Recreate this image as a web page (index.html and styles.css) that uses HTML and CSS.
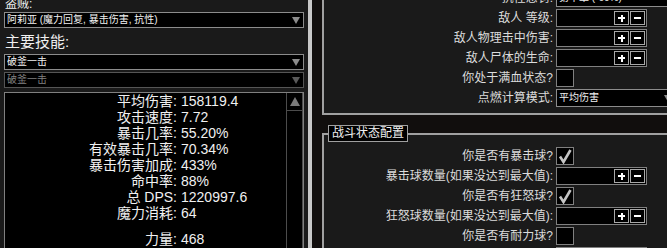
FILE: index.html
```html
<!DOCTYPE html>
<html lang="zh">
<head>
  <meta charset="UTF-8" />
  <title>配置</title>
  <link rel="stylesheet" href="styles.css">
</head>
<body>
  <div class="app">
    <div class="side">
      <div class="label small">盗贼:</div>
      <div class="select"><span>阿莉亚 (魔力回复, 暴击伤害, 抗性)</span><i class="arrow"></i></div>
      <div class="label big">主要技能:</div>
      <div class="select"><span>破釜一击</span><i class="arrow"></i></div>
      <div class="select disabled"><span>破釜一击</span><i class="arrow"></i></div>
      <div class="stats">
        <div class="stat-list">
          <div class="stat"><span class="k">平均伤害:</span><span class="v">158119.4</span></div>
          <div class="stat"><span class="k">攻击速度:</span><span class="v">7.72</span></div>
          <div class="stat"><span class="k">暴击几率:</span><span class="v">55.20%</span></div>
          <div class="stat"><span class="k">有效暴击几率:</span><span class="v">70.34%</span></div>
          <div class="stat"><span class="k">暴击伤害加成:</span><span class="v">433%</span></div>
          <div class="stat"><span class="k">命中率:</span><span class="v">88%</span></div>
          <div class="stat"><span class="k">总 DPS:</span><span class="v">1220997.6</span></div>
          <div class="stat"><span class="k">魔力消耗:</span><span class="v">64</span></div>
          <div class="stat spaced"><span class="k">力量:</span><span class="v">468</span></div>
        </div>
        <div class="scrollbar">
          <div class="scroll-up"><i></i></div>
        </div>
      </div>
    </div>
    <div class="divider"></div>
    <div class="config">
      <div class="section first">
        <div class="row"><span class="name">抗性惩罚:</span><div class="select wide"><span>第十章 (-60%)</span><i class="arrow"></i></div></div>
        <div class="row"><span class="name">敌人 等级:</span><div class="input"><b class="btn plus"></b><b class="btn minus"></b></div></div>
        <div class="row"><span class="name">敌人物理击中伤害:</span><div class="input"><b class="btn plus"></b><b class="btn minus"></b></div></div>
        <div class="row"><span class="name">敌人尸体的生命:</span><div class="input"><b class="btn plus"></b><b class="btn minus"></b></div></div>
        <div class="row"><span class="name">你处于满血状态?</span><div class="check"></div></div>
        <div class="row"><span class="name">点燃计算模式:</span><div class="select wide"><span>平均伤害</span><i class="arrow"></i></div></div>
      </div>
      <fieldset class="section">
        <legend>战斗状态配置</legend>
        <div class="row"><span class="name">你是否有暴击球?</span><div class="check on"><svg viewBox="0 0 16 16"><polyline points="3,8.5 6.5,14 13.5,2"/></svg></div></div>
        <div class="row"><span class="name">暴击球数量(如果没达到最大值):</span><div class="input"><b class="btn plus"></b><b class="btn minus"></b></div></div>
        <div class="row"><span class="name">你是否有狂怒球?</span><div class="check on"><svg viewBox="0 0 16 16"><polyline points="3,8.5 6.5,14 13.5,2"/></svg></div></div>
        <div class="row"><span class="name">狂怒球数量(如果没达到最大值):</span><div class="input"><b class="btn plus"></b><b class="btn minus"></b></div></div>
        <div class="row"><span class="name">你是否有耐力球?</span><div class="check"></div></div>
        <div class="row"><span class="name">耐力球数量(如果没达到最大值):</span><div class="input"><b class="btn plus"></b><b class="btn minus"></b></div></div>
      </fieldset>
    </div>
  </div>
</body>
</html>
```

FILE: styles.css
```css
* { margin: 0; padding: 0; box-sizing: border-box; }
body {
  background: #1a1a1a;
  color: #f0f0f0;
  font-family: "Liberation Sans", "Noto Sans CJK SC", sans-serif;
  overflow: hidden;
}
.app {
  display: flex;
  width: 667px;
  height: 248px;
  overflow: hidden;
}

/* left column: build + skill + stats */
.side {
  width: 308px;
  flex: none;
  padding-left: 4px;
  background: #1a1a1a;
}
.label.small {
  font-size: 12px;
  line-height: 16px;
  margin-top: -4px;
  padding-left: 1px;
}
.label.big {
  font-size: 15px;
  line-height: 20px;
  margin: 4px 0 2px;
  padding-left: 1px;
}
.select {
  display: flex;
  align-items: center;
  width: 300px;
  height: 16px;
  border: 1px solid #8c8c8c;
  background: #000;
  font-size: 10px;
  line-height: 14px;
  padding: 0 3px 0 2px;
  color: #f0f0f0;
}
.select span { flex: 1; white-space: nowrap; overflow: hidden; }
.select .arrow {
  width: 0;
  height: 0;
  border-left: 4px solid transparent;
  border-right: 4px solid transparent;
  border-top: 7px solid #8c8c8c;
}
.select.disabled { margin-top: 2px; border-color: #555; color: #808080; }
.select.disabled .arrow { border-top-color: #5a5a5a; }

.stats {
  display: flex;
  width: 300px;
  height: 180px;
  margin-top: 4px;
  border: 1px solid #808080;
  background: #000;
}
.stat-list { flex: 1; }
.stat {
  display: flex;
  font-size: 14px;
  line-height: 16px;
  white-space: nowrap;
}
.stat .k { width: 172px; text-align: right; }
.stat .v { padding-left: 4px; }
.stat.spaced { margin-top: 10px; }
.scrollbar {
  width: 17px;
  border-left: 1px solid #4c4c4c;
  border-right: 1px solid #4c4c4c;
}
.scroll-up {
  display: flex;
  justify-content: center;
  align-items: center;
  height: 18px;
  border-bottom: 1px solid #4c4c4c;
}
.scroll-up i {
  width: 0;
  height: 0;
  border-left: 5px solid transparent;
  border-right: 5px solid transparent;
  border-bottom: 9px solid #7a7a7a;
}

.divider { width: 4px; flex: none; background: #c8c8c8; }

/* right column: configuration sections */
.config {
  flex: 1;
  background: #110e0d;
  padding-left: 10px;
  overflow: hidden;
}
.section {
  width: 420px;
  background: #1a1a1a;
  border: 2px solid #a0a0a0;
  border-right: 0;
}
.section.first {
  border-top: 0;
  margin-top: -11px;
  padding-bottom: 4px;
}
fieldset.section {
  margin-top: 10px;
  padding: 5px 0 0;
  min-width: 0;
}
legend {
  margin-left: 4px;
  padding: 0 3px;
  border: 1px solid #a0a0a0;
  background: #000;
  font-size: 12px;
  line-height: 15px;
  color: #f0f0f0;
}
.row {
  display: flex;
  align-items: center;
  height: 18px;
  margin-bottom: 2px;
}
.row .name {
  width: 229px;
  margin-right: 3px;
  text-align: right;
  font-size: 12px;
  line-height: 18px;
  color: #dcdcdc;
  white-space: nowrap;
}
.row .select.wide { width: 120px; height: 18px; }
.input {
  display: flex;
  justify-content: flex-end;
  align-items: center;
  gap: 1px;
  width: 91px;
  height: 18px;
  padding-right: 1px;
  border: 1px solid #808080;
  background: #000;
}
.btn {
  position: relative;
  width: 15px;
  height: 14px;
  border: 1px solid #a8a8a8;
  background: #000;
}
.btn::before, .btn.plus::after {
  content: "";
  position: absolute;
  left: 3px;
  top: 5px;
  width: 7px;
  height: 2px;
  background: #fff;
}
.btn.plus::after { left: 5.5px; top: 2.5px; width: 2px; height: 7px; }
.check {
  width: 18px;
  height: 18px;
  border: 1px solid #808080;
  background: #000;
}
.check svg { display: block; width: 16px; height: 16px; }
.check polyline {
  fill: none;
  stroke: #c4c4c4;
  stroke-width: 2.6;
  stroke-linejoin: miter;
}
```
